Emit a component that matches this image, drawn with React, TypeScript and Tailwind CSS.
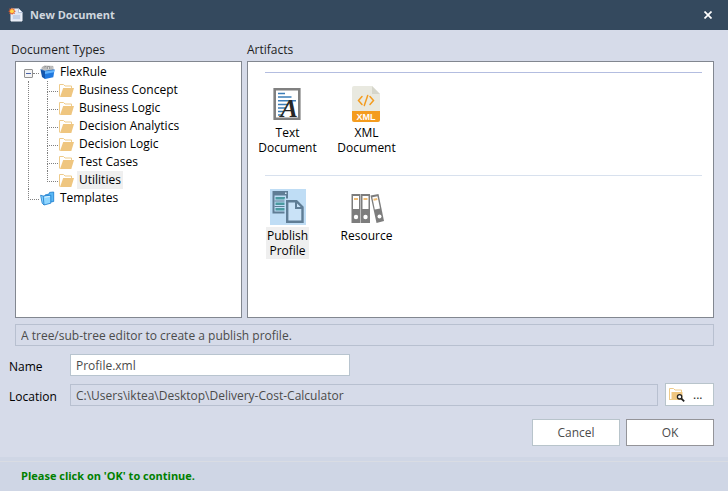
import type { ReactNode } from 'react';
import clsx from 'clsx';

const documentTypes = [
  'Business Concept',
  'Business Logic',
  'Decision Analytics',
  'Decision Logic',
  'Test Cases',
  'Utilities',
];

function NewDocumentIcon() {
  return (
    <svg className="h-4 w-4" viewBox="0 0 16 16" aria-hidden="true">
      <path d="M3 2h8l3 3v9H3z" fill="#dfe6f3" stroke="#f4f7fc" />
      <path d="M10.5 1.5v4h4z" fill="#fff" stroke="#8fa3c4" strokeWidth=".6" />
      <path d="M5 8h7v4H5z" fill="#c3d0e6" />
      <path
        d="M4 .5l.9 1.6 1.8-.6-.5 1.8L8 4.2l-1.7.9.6 1.8-1.8-.5L4 8l-.9-1.6-1.8.5.5-1.8L.2 4.2l1.6-.9-.5-1.8 1.8.6z"
        fill="#e8602c"
      />
      <circle cx="4" cy="4.2" r="1.9" fill="#ffd84a" />
    </svg>
  );
}

function BoxIcon() {
  return (
    <svg className="h-[15px] w-[15px]" viewBox="0 0 15 15" aria-hidden="true">
      <path d="M2 5V2.5L4.5 1l8.5.4V5z" fill="#dcdcdc" stroke="#8a8a8a" strokeWidth=".6" />
      <path d="M4 4V2l2-.6V4M7.5 4V1.5h2V4M11 4V2" fill="none" stroke="#8b8b8b" strokeWidth=".8" />
      <path d="M.5 4.5L5 6v8l-3-2z" fill="#1557ad" />
      <path d="M5 6l9.5-1.3-1.2 7.6L5 14z" fill="#2079e0" />
      <path d="M5 6l9.500-1.300-.400 2.600L5 9z" fill="#63b6ff" />
      <path d="M.5 4.500L5 6l9.500-1.300" fill="none" stroke="#1a62b8" strokeWidth=".6" />
    </svg>
  );
}

function FolderIcon() {
  return (
    <svg className="h-[15px] w-[15px]" viewBox="0 0 15 15" aria-hidden="true">
      <path d="M.5 13.5v-12h4L6 3h6.5v2" fill="none" stroke="#eecb8b" />
      <path d="M1 14L4.2 5H15l-2.7 9z" fill="#efc680" />
    </svg>
  );
}

function TemplatesIcon() {
  return (
    <svg className="h-[15px] w-[15px]" viewBox="0 0 15 15" aria-hidden="true">
      <path d="M5 4l4-1 .6-1.6L13.7 1v9.5L5 12z" fill="#58b8f5" stroke="#1679cb" strokeWidth=".8" />
      <path d="M.6 4.2L3.2 5l7.600-.800v8L4 14 2.200 12.200z" fill="#8fd6ff" stroke="#1679cb" strokeWidth=".8" />
      <path d="M3.2 5L4 14" stroke="#1679cb" strokeWidth=".8" />
      <path d="M4.600 6.200l5.200-.700" stroke="#e4f6ff" />
    </svg>
  );
}

function BrowseIcon() {
  return (
    <svg className="h-4 w-4" viewBox="0 0 16 16" aria-hidden="true">
      <path d="M.5 13V1.5h4L6 3h6.5v2" fill="none" stroke="#eecb8b" />
      <path d="M2.5 5H13.5v8h-11z" fill="#efc680" />
      <path d="M0 12.500h8" stroke="#eecb8b" />
      <circle cx="10.600" cy="9.800" r="2.200" fill="#fff" stroke="#222" strokeWidth="1.300" />
      <path d="M12.400 11.600l2.800 2.800" stroke="#222" strokeWidth="1.800" />
    </svg>
  );
}

function TextDocumentIcon() {
  return (
    <svg className="h-9 w-9" viewBox="0 0 36 36" aria-hidden="true">
      <path d="M5.7 3.300h24.600v29.400H5.700z" fill="#fff" stroke="#808080" strokeWidth="2.600" />
      <path
        d="M9 7.500h7M9 11h13.500M9 14.700h18M9 18.500h10.500M9 22h7.500M9 25.500h5.500M9 29h4"
        stroke="#3b7db8"
        strokeWidth="1.600"
      />
      <text
        x="11.500"
        y="31"
        fontFamily="Liberation Serif, serif"
        fontSize="26"
        fontStyle="italic"
        fontWeight="bold"
        fill="#262626"
      >
        A
      </text>
    </svg>
  );
}

function XmlDocumentIcon() {
  return (
    <svg className="h-9 w-9" viewBox="0 0 36 36" aria-hidden="true">
      <path d="M6 0h18l8 8v18H4V2a2 2 0 012-2z" fill="#e9e9e0" />
      <path d="M24 0l8 8h-8z" fill="#d6d6cb" />
      <path d="M4 25h28v9a2 2 0 01-2 2H6a2 2 0 01-2-2z" fill="#f49c1f" />
      <path
        d="M14 10.500L10.500 14.500 14 18.500M22 10.500l3.500 4-3.500 4M19.700 9.500l-3.400 10"
        fill="none"
        stroke="#f49c1f"
        strokeWidth="1.500"
        strokeLinecap="round"
      />
      <text
        x="18"
        y="34"
        textAnchor="middle"
        fontFamily="Liberation Sans, sans-serif"
        fontSize="9"
        fontWeight="bold"
        fill="#fff"
      >
        XML
      </text>
    </svg>
  );
}

function PublishProfileIcon() {
  return (
    <svg className="h-9 w-9 bg-[#bfddf5]" viewBox="0 0 36 36" aria-hidden="true">
      <path d="M2.500 2h15.500v22.500H2.500z" fill="#5f7d95" />
      <path d="M4.500 6.500h11.500v16H4.500z" fill="#bfddf5" />
      <path d="M5.500 9.300H15M5.500 14.800H15M5.500 20.200H15" stroke="#4a9aa0" strokeWidth="2.400" />
      <path d="M4.500 12h11.500M4.500 17.500h11.500" stroke="#5f7d95" />
      <path d="M15 4.200h1.500" stroke="#d8ebfa" strokeWidth="1.400" />
      <path d="M14.500 9.500H28l7 7V36H14.500z" fill="#bfddf5" />
      <path d="M17.200 12.200h9.300l6 6v14.600H17.200z" fill="#c9e2f7" stroke="#5f7d95" strokeWidth="2.400" />
      <path d="M26 12.500v6.500h6.500" fill="none" stroke="#5f7d95" strokeWidth="2" />
    </svg>
  );
}

function ResourceIcon() {
  return (
    <svg className="h-9 w-9" viewBox="0 0 36 36" aria-hidden="true">
      <path d="M2.500 5h9v29h-9zM12 5h9v29h-9z" fill="#7d7d7d" />
      <path d="M4 7h6v13H4zM13.500 7h6v13h-6z" fill="#fff" />
      <path d="M5 10h4M14.500 10h4" stroke="#efbd76" strokeWidth="2" />
      <circle cx="7" cy="28" r="2.200" fill="#fff" />
      <circle cx="16.500" cy="28" r="2.200" fill="#fff" />
      <path d="M21.500 6.500l8-1.500 5.500 27-7.500 2z" fill="#7d7d7d" />
      <path d="M23.300 8.300l5.200-1.100 2.500 12.300-5.200 1.100z" fill="#fff" />
      <path d="M24.500 10.700l3.800-.8" stroke="#efbd76" strokeWidth="2" />
      <circle cx="30.500" cy="27.500" r="2" fill="#fff" />
    </svg>
  );
}

/* Dotted elbow in front of a tree item */
function Branch({ last = false }: { last?: boolean }) {
  return (
    <span className="flex h-[18px] w-3 shrink-0 flex-col pr-px">
      <span className="h-[11px] border-b border-l border-dotted border-[#808080]" />
      {!last && <span className="flex-1 border-l border-dotted border-[#808080]" />}
    </span>
  );
}

function TreeItem({
  icon,
  label,
  selected = false,
}: {
  icon: ReactNode;
  label: string;
  selected?: boolean;
}) {
  return (
    <button type="button" className="flex h-[18px] items-center gap-[3px]">
      {icon}
      <span className={clsx('px-0.5 leading-[18px] whitespace-nowrap', selected && 'bg-[#efefef]')}>
        {label}
      </span>
    </button>
  );
}

function Artifact({
  icon,
  label,
  selected = false,
}: {
  icon: ReactNode;
  label: string;
  selected?: boolean;
}) {
  return (
    <li className="flex w-[79px] justify-center">
      <button type="button" className="flex flex-col items-center gap-0.5">
        {icon}
        <span
          className={clsx(
            'w-min px-px py-px text-center leading-[15px]',
            selected && 'bg-[#efefef]'
          )}
        >
          {label}
        </span>
      </button>
    </li>
  );
}

export default function App() {
  return (
    <div className="flex min-h-screen flex-col bg-[#d6dbe9] font-['Open_Sans',sans-serif] text-[12px] text-black">
      {/* Title bar */}
      <header className="flex h-[30px] items-center gap-1.5 bg-[#34495e] pr-4 pl-2">
        <NewDocumentIcon />
        <h1 className="flex-1 text-[11px] leading-[18px] font-bold text-[#d0d7de]">New Document</h1>
        <button type="button" aria-label="Close" className="flex h-4 w-2 items-center justify-center">
          <svg className="h-2 w-2" viewBox="0 0 8 8" aria-hidden="true">
            <path d="M.5.5l7 7M7.5.5l-7 7" stroke="#fff" strokeWidth="1.7" />
          </svg>
        </button>
      </header>

      <main className="flex flex-1 flex-col pr-3.5 pl-[15px]">
        {/* Tree and artifact list */}
        <div className="grid flex-1 grid-cols-[227fr_467fr] gap-[5px]">
          <section className="flex flex-col">
            <h2 className="-ml-1 h-[31px] pt-[11px] leading-[18px] text-[#1e1e1e]">Document Types</h2>
            <div className="flex-1 border border-[#828790] bg-white py-px pl-2">
              <ul>
                <li>
                  <div className="flex h-[18px] items-center">
                    <button
                      type="button"
                      aria-label="Collapse FlexRule"
                      className="mt-0.5 flex h-[9px] w-[9px] items-center justify-center rounded-[1px] border border-[#919191] bg-[#f4f4f4]"
                    >
                      <span className="h-px w-[5px] bg-[#4b63a7]" />
                    </button>
                    <span className="mt-0.5 mr-px h-px w-1.5 border-t border-dotted border-[#808080]" />
                    <TreeItem icon={<BoxIcon />} label="FlexRule" />
                  </div>
                  <ul className="ml-1 border-l border-dotted border-[#808080] pl-[18px]">
                    {documentTypes.map((name, i) => (
                      <li key={name} className="flex">
                        <Branch last={i === documentTypes.length - 1} />
                        <TreeItem icon={<FolderIcon />} label={name} selected={name === 'Utilities'} />
                      </li>
                    ))}
                  </ul>
                </li>
                <li className="ml-1 flex">
                  <Branch last />
                  <TreeItem icon={<TemplatesIcon />} label="Templates" />
                </li>
              </ul>
            </div>
          </section>

          <section className="flex flex-col">
            <h2 className="h-[31px] pt-[11px] leading-[18px] text-[#1e1e1e]">Artifacts</h2>
            <div className="flex-1 border border-[#828790] bg-white pt-2.5">
              <hr className="mr-[11px] ml-[17px] border-[#b3bde0]" />
              <ul className="flex h-[102px] pt-[13px]">
                <Artifact icon={<TextDocumentIcon />} label="Text Document" />
                <Artifact icon={<XmlDocumentIcon />} label="XML Document" />
              </ul>
              <hr className="mr-[11px] ml-[17px] border-[#d8e1ee]" />
              <ul className="flex pt-[13px]">
                <Artifact icon={<PublishProfileIcon />} label="Publish Profile" selected />
                <Artifact icon={<ResourceIcon />} label="Resource" />
              </ul>
            </div>
          </section>
        </div>

        <input
          readOnly
          aria-label="Description"
          value="A tree/sub-tree editor to create a publish profile."
          className="mt-1.5 h-[22px] w-full border border-[#b8c0d0] px-[5px] text-[#4b4b4b]"
        />

        {/* Name and location */}
        <div className="-ml-1.5 pt-2">
          <div className="flex items-center">
            <label htmlFor="name" className="w-[61px] pt-1 leading-[18px]">
              Name
            </label>
            <input
              id="name"
              defaultValue="Profile.xml"
              className="h-[22px] w-[280px] border border-[#b8c4cf] bg-white px-[5px] text-[#4b4b4b]"
            />
          </div>
          <div className="flex items-end pt-[7px]">
            <label htmlFor="location" className="w-[61px] leading-[18px]">
              Location
            </label>
            <input
              id="location"
              readOnly
              value="C:\Users\iktea\Desktop\Delivery-Cost-Calculator"
              className="h-[22px] min-w-0 flex-1 border border-[#b8c0d0] px-[5px] text-[#4b4b4b]"
            />
            <button
              type="button"
              className="ml-[7px] flex h-[23px] w-[49px] items-center gap-2 border border-[#b8c4cb] bg-white pl-[3px] text-[#1e1e1e]"
            >
              <BrowseIcon />
              ...
            </button>
          </div>
        </div>

        <div className="flex justify-end gap-1.5 pt-[13px] pb-[11px]">
          <button type="button" className="h-[27px] w-[88px] border border-[#b8c4cb] bg-white text-[#4b4b4b]">
            Cancel
          </button>
          <button type="button" className="h-[27px] w-[88px] border border-[#949499] bg-white text-[#4b4b4b]">
            OK
          </button>
        </div>
      </main>

      <footer className="bg-[#cfd6e5] pt-1">
        <p className="border-t border-[#d9dce3] pt-[5px] pb-1.5 pl-[21px] text-[11px] leading-[18px] font-bold text-[#008000]">
          Please click on 'OK' to continue.
        </p>
      </footer>
    </div>
  );
}
